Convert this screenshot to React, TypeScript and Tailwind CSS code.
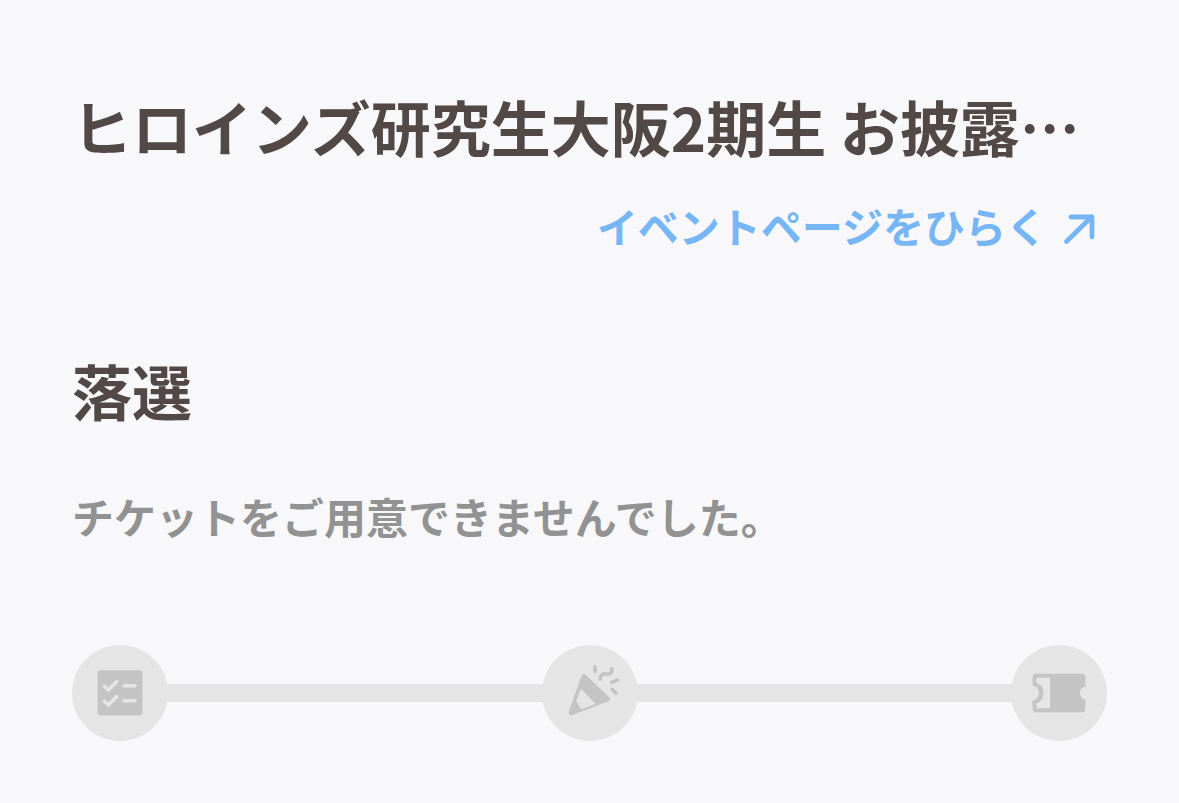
import type { ReactNode } from 'react';

interface Step {
  label: string;
  icon: ReactNode;
}

function ChecklistIcon() {
  return (
    <svg viewBox="0 0 96 96" className="size-24" fill="none" aria-hidden="true">
      <rect x="25.5" y="25.2" width="45" height="45.2" rx="3.5" fill="#c4c4c4" />
      <g stroke="#e5e5e5" strokeWidth="3.6" strokeLinecap="round" strokeLinejoin="round">
        <path d="M32.5 41.2l4 3.8 8.3-8.4" />
        <path d="M32.5 56.2l4 3.8 8.3-8.4" />
        <path d="M52 40.8h11" />
        <path d="M52 55.8h11" />
      </g>
    </svg>
  );
}

function PartyIcon() {
  return (
    <svg viewBox="0 0 96 96" className="size-24" fill="none" aria-hidden="true">
      <path
        d="M42 32L65 54 29.5 67.5z"
        fill="#c4c4c4"
        stroke="#c4c4c4"
        strokeWidth="5.6"
        strokeLinejoin="round"
      />
      <path
        d="M39.2 44.6L52.4 58.6 39.2 63.4 34.8 56z"
        fill="#e5e5e5"
        stroke="#e5e5e5"
        strokeWidth="1.2"
        strokeLinejoin="round"
      />
      <g stroke="#c4c4c4" strokeWidth="3.6" strokeLinecap="round">
        <path d="M53 21.8v5" />
        <path d="M58.2 34.2c.4-4.5 3-6.4 6.8-5.2 3.6.6 5-1.8 5-5.4" />
        <path d="M69.6 37.2l6-2.2" />
        <path d="M70 44.3l4 3.9" />
      </g>
    </svg>
  );
}

function TicketIcon() {
  return (
    <svg viewBox="0 0 96 96" className="size-24" aria-hidden="true">
      <path
        d="M25 28.8h46a3.4 3.4 0 0 1 3.4 3.4v9.3a6.6 6.6 0 0 0 0 13v9.3a3.4 3.4 0 0 1-3.4 3.4H25a3.4 3.4 0 0 1-3.4-3.4v-8.3a7.6 7.6 0 0 0 0-15v-8.3a3.4 3.4 0 0 1 3.4-3.4z"
        fill="#c4c4c4"
      />
      <path d="M25.4 32.7H39v30.6H25.4v-5a11 11 0 0 0 0-20.6z" fill="#e5e5e5" />
    </svg>
  );
}

const steps: Step[] = [
  { label: '申込', icon: <ChecklistIcon /> },
  { label: '抽選', icon: <PartyIcon /> },
  { label: 'チケット', icon: <TicketIcon /> },
];

export default function App() {
  return (
    <main className="min-h-screen bg-[#f8f8fb] px-[72px] pt-[82px] pb-16 font-['Noto_Sans_CJK_JP',sans-serif] font-bold">
      <h1 className="truncate text-[60px] leading-[88px] text-[#524846]">
        ヒロインズ研究生大阪2期生 お披露…
      </h1>

      <div className="mt-6 flex justify-end pr-2">
        <a href="#event" className="flex items-center gap-3 text-[41px] leading-[62px] text-[#77b6f5]">
          イベントページをひらく
          <svg
            viewBox="0 0 40 40"
            className="size-10"
            fill="none"
            stroke="currentColor"
            strokeWidth="4.8"
            strokeLinecap="round"
            strokeLinejoin="round"
            aria-hidden="true"
          >
            <path d="M7.5 36.5L32.5 12" />
            <path d="M12 12h21v20" />
          </svg>
        </a>
      </div>

      <h2 className="mt-[90px] text-[60px] leading-[88px] text-[#524846]">落選</h2>

      <p className="mt-[50px] text-[42px] leading-[64px] text-[#929292]">
        チケットをご用意できませんでした。
      </p>

      {/* Progress */}
      <div className="relative mt-[97px]">
        <div className="absolute inset-x-12 top-[39px] h-[18px] bg-[#e5e5e5]" />
        <ol className="relative flex justify-between">
          {steps.map((step) => (
            <li key={step.label} aria-label={step.label} className="size-24 rounded-full bg-[#e5e5e5]">
              {step.icon}
            </li>
          ))}
        </ol>
      </div>
    </main>
  );
}
